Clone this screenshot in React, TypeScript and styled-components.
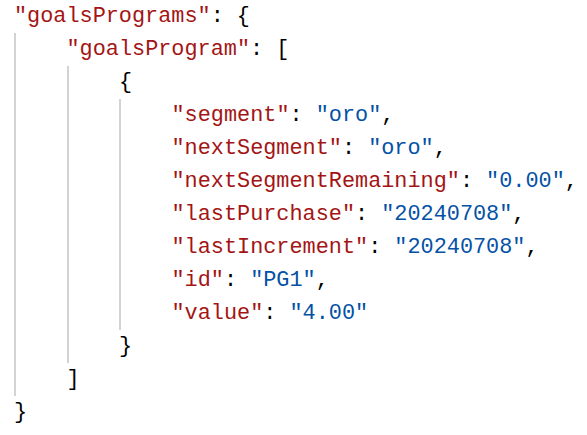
import React from "react";
import styled, { createGlobalStyle } from "styled-components";

const Global = createGlobalStyle`
  html, body { margin: 0; padding: 0; background: #ffffff; }
`;

const Editor = styled.div`
  padding: 0 0 0 14px;
  font-family: "Liberation Mono", "DejaVu Sans Mono", monospace;
  font-size: 21.85px;
  color: #000000;
  white-space: pre;
`;

const Line = styled.div`
  height: 33px;
  line-height: 33px;
`;

const Children = styled.div`
  border-left: 2px solid #d3d3d3;
  padding-left: 50.5px;
`;

const Key = styled.span`
  color: #a31515;
`;

const Str = styled.span`
  color: #0451a5;
`;

const Punct = styled.span`
  color: #000000;
`;

type Entry = { key: string; value: string };

const entries: Entry[] = [
  { key: "segment", value: "oro" },
  { key: "nextSegment", value: "oro" },
  { key: "nextSegmentRemaining", value: "0.00" },
  { key: "lastPurchase", value: "20240708" },
  { key: "lastIncrement", value: "20240708" },
  { key: "id", value: "PG1" },
  { key: "value", value: "4.00" },
];

export default function App() {
  return (
    <>
      <Global />
      <Editor>
        <Line>
          <Key>"goalsPrograms"</Key>
          <Punct>: {"{"}</Punct>
        </Line>
        <Children>
          <Line>
            <Key>"goalsProgram"</Key>
            <Punct>: [</Punct>
          </Line>
          <Children>
            <Line>
              <Punct>{"{"}</Punct>
            </Line>
            <Children>
              {entries.map((e, i) => (
                <Line key={e.key}>
                  <Key>"{e.key}"</Key>
                  <Punct>: </Punct>
                  <Str>"{e.value}"</Str>
                  {i < entries.length - 1 && <Punct>,</Punct>}
                </Line>
              ))}
            </Children>
            <Line>
              <Punct>{"}"}</Punct>
            </Line>
          </Children>
          <Line>
            <Punct>]</Punct>
          </Line>
        </Children>
        <Line>
          <Punct>{"}"}</Punct>
        </Line>
      </Editor>
    </>
  );
}
